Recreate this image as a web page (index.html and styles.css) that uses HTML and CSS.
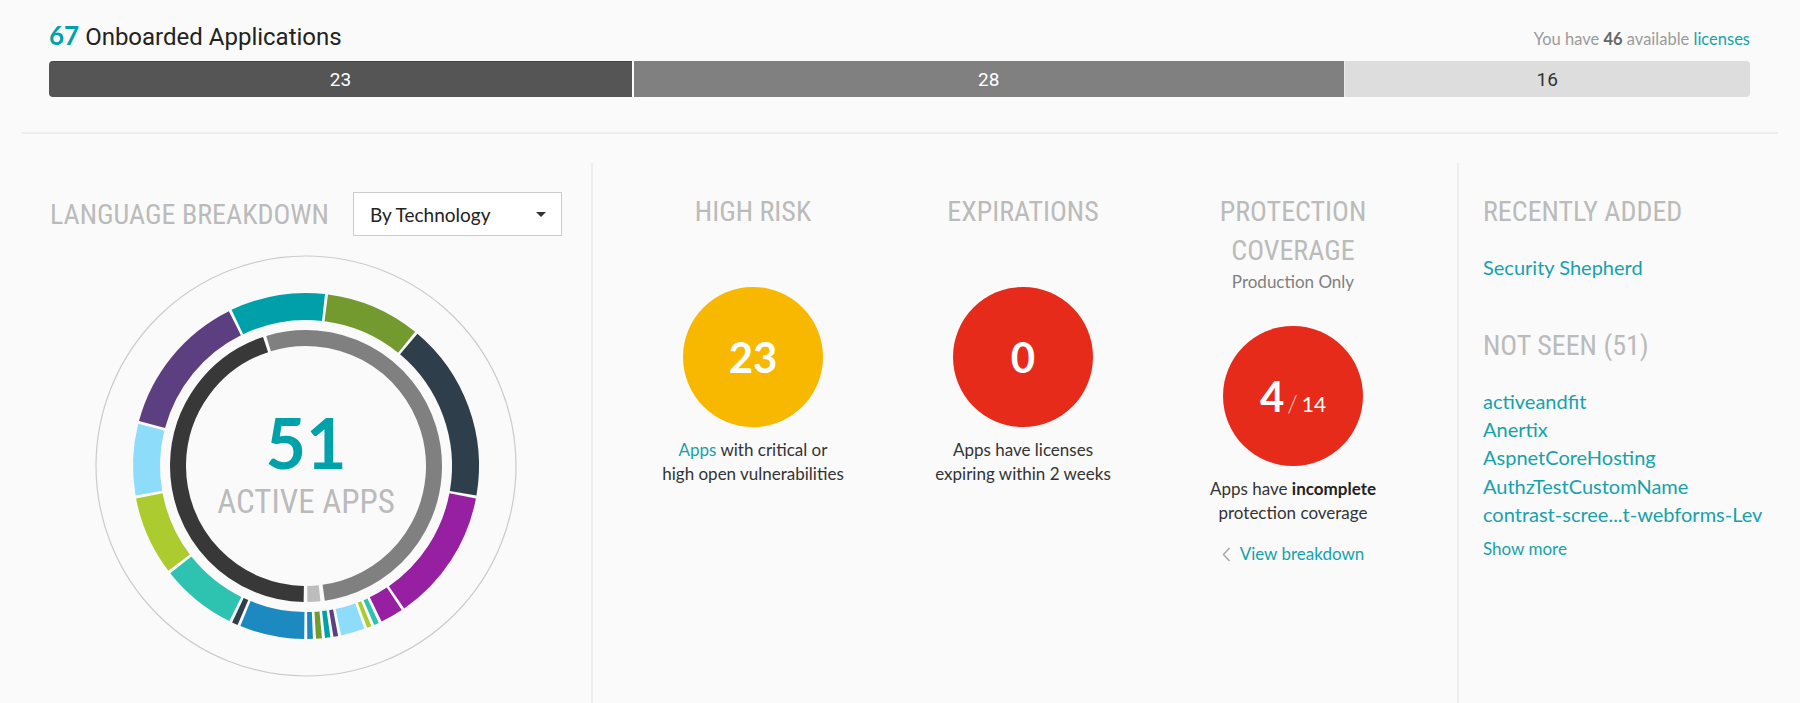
FILE: index.html
```html
<!DOCTYPE html>
<html lang="en">
<head>
<meta charset="utf-8">
<title>Applications Overview</title>
<link rel="stylesheet" href="styles.css">
</head>
<body>
<div class="page">
  <header class="summary">
    <div class="summary-head">
      <h1 class="summary-title"><span class="summary-count">67</span> Onboarded Applications</h1>
      <p class="licenses">You have <strong>46</strong> available <a class="link" href="#">licenses</a></p>
    </div>
    <div class="bar">
      <div class="bar-seg bar-seg--dark" style="flex-grow:23">23</div>
      <div class="bar-seg bar-seg--mid" style="flex-grow:28">28</div>
      <div class="bar-seg bar-seg--light" style="flex-grow:16">16</div>
    </div>
  </header>
  <hr class="rule">
  <main class="panels">
    <section class="panel panel--lang">
      <div class="lang-head">
        <h2 class="section-title">Language Breakdown</h2>
        <div class="select"><span>By Technology</span><span class="caret"></span></div>
      </div>
      <div class="donut">
        <svg class="donut-chart" viewBox="-211 -211 422 422" width="422" height="422">
          <circle r="210" fill="none" stroke="#cbcbcb" stroke-width="1.2"/>
          <g fill="none" stroke-width="27">
            <circle r="159.5" stroke="#00a0aa" stroke-dasharray="88.53 2000" transform="rotate(244.5)"/>
            <circle r="159.5" stroke="#729a2f" stroke-dasharray="88.53 2000" transform="rotate(-82.7)"/>
            <circle r="159.5" stroke="#2e3f4b" stroke-dasharray="166.19 2000" transform="rotate(-49.9)"/>
            <circle r="159.5" stroke="#9620a1" stroke-dasharray="124.16 2000" transform="rotate(10.8)"/>
            <circle r="159.5" stroke="#9620a1" stroke-dasharray="21.44 2000" transform="rotate(56.4)"/>
            <circle r="159.5" stroke="#2ec3b1" stroke-dasharray="4.73 2000" transform="rotate(65.1)"/>
            <circle r="159.5" stroke="#abcb2f" stroke-dasharray="4.18 2000" transform="rotate(67.8)"/>
            <circle r="159.5" stroke="#8dddfa" stroke-dasharray="22.27 2000" transform="rotate(70.3)"/>
            <circle r="159.5" stroke="#5c3f80" stroke-dasharray="4.45 2000" transform="rotate(79.3)"/>
            <circle r="159.5" stroke="#00a0aa" stroke-dasharray="5.01 2000" transform="rotate(81.9)"/>
            <circle r="159.5" stroke="#729a2f" stroke-dasharray="5.57 2000" transform="rotate(84.7)"/>
            <circle r="159.5" stroke="#1c89c0" stroke-dasharray="5.29 2000" transform="rotate(87.7)"/>
            <circle r="159.5" stroke="#1c89c0" stroke-dasharray="60.41 2000" transform="rotate(90.6)"/>
            <circle r="159.5" stroke="#2e3f4b" stroke-dasharray="5.57 2000" transform="rotate(113.3)"/>
            <circle r="159.5" stroke="#2ec3b1" stroke-dasharray="70.71 2000" transform="rotate(116.3)"/>
            <circle r="159.5" stroke="#abcb2f" stroke-dasharray="73.77 2000" transform="rotate(142.7)"/>
            <circle r="159.5" stroke="#8dddfa" stroke-dasharray="66.53 2000" transform="rotate(170.2)"/>
            <circle r="159.5" stroke="#5c3f80" stroke-dasharray="134.74 2000" transform="rotate(195.1)"/>
          </g>
          <g fill="none" stroke-width="16">
            <circle r="128" stroke="#383838" stroke-dasharray="358.56 2000" transform="rotate(91)"/>
            <circle r="128" stroke="#808080" stroke-dasharray="422.23 2000" transform="rotate(253)"/>
            <circle r="128" stroke="#bdbdbd" stroke-dasharray="12.29 2000" transform="rotate(83.9)"/>
          </g>
        </svg>
        <div class="donut-label">
          <span class="donut-value">51</span>
          <span class="donut-caption">Active Apps</span>
        </div>
      </div>
    </section>
    <div class="vdivider"></div>
    <section class="panel panel--stats">
      <div class="stat">
        <h2 class="section-title">High Risk</h2>
        <div class="stat-circle stat-circle--warn">23</div>
        <p class="stat-desc"><a class="link" href="#">Apps</a> with critical or<br>high open vulnerabilities</p>
      </div>
      <div class="stat">
        <h2 class="section-title">Expirations</h2>
        <div class="stat-circle stat-circle--danger">0</div>
        <p class="stat-desc">Apps have licenses<br>expiring within 2 weeks</p>
      </div>
      <div class="stat stat--coverage">
        <h2 class="section-title">Protection<br>Coverage</h2>
        <p class="stat-sub">Production Only</p>
        <div class="stat-circle stat-circle--danger stat-circle--fraction"><span class="frac-num">4</span><span class="frac-sep">/</span><span class="frac-den">14</span></div>
        <p class="stat-desc">Apps have <strong>incomplete</strong><br>protection coverage</p>
        <a class="view-link link" href="#">
          <svg class="chevron" width="9" height="15" viewBox="0 0 9 15"><polyline points="7.5,1 1.5,7.5 7.5,14" fill="none" stroke="#a8a8a8" stroke-width="1.5"/></svg>
          <span>View breakdown</span>
        </a>
      </div>
    </section>
    <div class="vdivider"></div>
    <section class="panel panel--recent">
      <h2 class="section-title">Recently Added</h2>
      <ul class="app-list">
        <li><a class="link" href="#">Security Shepherd</a></li>
      </ul>
      <h2 class="section-title section-title--spaced">Not Seen (51)</h2>
      <ul class="app-list">
        <li><a class="link" href="#">activeandfit</a></li>
        <li><a class="link" href="#">Anertix</a></li>
        <li><a class="link" href="#">AspnetCoreHosting</a></li>
        <li><a class="link" href="#">AuthzTestCustomName</a></li>
        <li><a class="link" href="#">contrast-scree...t-webforms-Lev</a></li>
      </ul>
      <a class="show-more link" href="#">Show more</a>
    </section>
  </main>
</div>
</body>
</html>
```

FILE: styles.css
```css
html, body {
  margin: 0;
  padding: 0;
}

body {
  background: #fafafa;
  font-family: Lato, "Open Sans", sans-serif;
  color: #333;
}

.page {
  display: flex;
  flex-direction: column;
  height: 100vh;
  overflow: hidden;
}

.link {
  color: #15a2ab;
  text-decoration: none;
}

/* ---------- summary ---------- */
.summary {
  padding: 20px 50px 0 49px;
}

.summary-head {
  display: flex;
  justify-content: space-between;
  align-items: baseline;
}

.summary-title {
  margin: 0;
  font: 400 24px/30px Roboto, "Liberation Sans", sans-serif;
  color: #222;
}

.summary-count {
  font: 700 26px/30px Lato, sans-serif;
  color: #00a2aa;
}

.licenses {
  margin: 0;
  font-size: 16.5px;
  color: #9a9a9a;
}

.licenses strong {
  color: #666;
  font-weight: 700;
}

.bar {
  display: flex;
  height: 36px;
  margin-top: 9px;
  border-radius: 4px;
  overflow: hidden;
}

.bar-seg {
  flex-basis: 0;
  display: flex;
  align-items: center;
  justify-content: center;
  font: 400 19px Roboto, "Liberation Sans", sans-serif;
  color: #fff;
}

.bar-seg--dark {
  background: #555;
  box-shadow: inset 0 1px 0 rgba(0, 0, 0, 0.18);
}

.bar-seg--mid {
  background: #808080;
  border-left: 2px solid #fff;
}

.bar-seg--light {
  background: #ddd;
  color: #333;
  border-left: 1px solid #eaeaea;
}

.rule {
  margin: 35px 22px 0 21px;
  border: 0;
  height: 2px;
  background: #eeeeee;
}

/* ---------- panels ---------- */
.panels {
  flex: 1;
  display: grid;
  grid-template-columns: 570px 2px 864px 2px 1fr;
  margin: 0 22px 0 21px;
}

.vdivider {
  background: #eeeeee;
  margin-top: 29px;
}

.section-title {
  margin: 0;
  font: 400 28px/39px "Roboto Condensed", "Liberation Sans Narrow", "DejaVu Sans Condensed", sans-serif;
  color: #bbbbbb;
  text-transform: uppercase;
  white-space: nowrap;
}

/* language */
.panel--lang {
  padding: 58px 29px 0;
}

.lang-head {
  display: flex;
  align-items: center;
  gap: 24px;
}

.select {
  box-sizing: border-box;
  width: 210px;
  height: 44px;
  border: 1px solid #cccccc;
  background: #fff;
  display: flex;
  align-items: center;
  justify-content: space-between;
  padding: 0 15px 0 16px;
  font-size: 19px;
  color: #222;
}

.caret {
  width: 0;
  height: 0;
  border-left: 5px solid transparent;
  border-right: 5px solid transparent;
  border-top: 5px solid #333;
}

.donut {
  position: relative;
  width: 422px;
  height: 422px;
  margin: 19px auto 0;
}

.donut-chart {
  display: block;
}

.donut-label {
  position: absolute;
  inset: 0;
  display: flex;
  flex-direction: column;
  align-items: center;
  justify-content: center;
  padding-bottom: 8px;
}

.donut-value {
  font: 700 70px/70px Lato, sans-serif;
  color: #00a2aa;
}

.donut-caption {
  margin-top: 8px;
  font: 400 33px/33px "Roboto Condensed", "Liberation Sans Narrow", "DejaVu Sans Condensed", sans-serif;
  color: #bbbbbb;
  text-transform: uppercase;
}

/* stats */
.panel--stats {
  padding: 58px 29px 0 25px;
  display: grid;
  grid-template-columns: repeat(3, 270px);
  align-items: start;
}

.stat {
  display: flex;
  flex-direction: column;
  align-items: center;
  text-align: center;
}

.stat-sub {
  margin: 1px 0 0;
  font-size: 17px;
  line-height: 22px;
  color: #808080;
}

.stat-circle {
  box-sizing: border-box;
  width: 140px;
  height: 140px;
  margin-top: 56px;
  border-radius: 50%;
  display: flex;
  align-items: center;
  justify-content: center;
  color: #fff;
  font: 700 42px/1 Lato, sans-serif;
}

.stat--coverage .stat-circle {
  margin-top: 33px;
}

.stat-circle--warn {
  background: #f8b800;
}

.stat-circle--danger {
  background: #e62b1a;
}

.stat-circle--fraction {
  align-items: baseline;
  padding-top: 70px;
  line-height: 0;
}

.frac-num {
  font-size: 42px;
}

.frac-sep {
  font-size: 24px;
  font-weight: 300;
  color: rgba(255, 255, 255, 0.8);
  margin: 0 4px 0 3px;
}

.frac-den {
  font-size: 21px;
  font-weight: 400;
}

.stat-desc {
  margin: 11px 0 0;
  font-size: 17px;
  line-height: 24px;
  color: #333;
}

.stat-desc strong {
  font-weight: 700;
  color: #222;
}

.view-link {
  margin-top: 17px;
  display: inline-flex;
  align-items: center;
  gap: 9px;
  font-size: 17px;
  line-height: 24px;
}

.chevron {
  display: block;
}

/* recent */
.panel--recent {
  padding: 58px 0 0 24px;
}

.section-title--spaced {
  margin-top: 45.5px;
}

.app-list {
  list-style: none;
  margin: 21.6px 0 0;
  padding: 0;
  font-size: 20px;
  line-height: 28.2px;
  white-space: nowrap;
}

.show-more {
  display: block;
  margin-top: 8.9px;
  font-size: 17px;
  line-height: 24px;
}
```
